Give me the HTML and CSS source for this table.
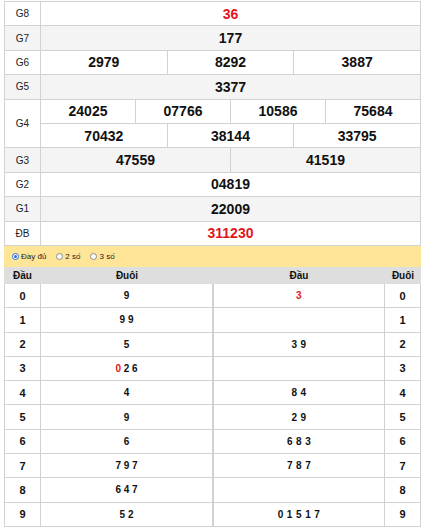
FILE: index.html
```html
<!DOCTYPE html>
<html>
<head>
<meta charset="utf-8">
<link rel="stylesheet" href="styles.css">
</head>
<body>
<div class="wrap">
  <div class="kq">
    <div class="row"><div class="lbl">G8</div><div class="vals c1"><div class="v red">36</div></div></div>
    <div class="row alt"><div class="lbl">G7</div><div class="vals c1"><div class="v">177</div></div></div>
    <div class="row"><div class="lbl">G6</div><div class="vals c3"><div class="v">2979</div><div class="v">8292</div><div class="v">3887</div></div></div>
    <div class="row alt"><div class="lbl">G5</div><div class="vals c1"><div class="v">3377</div></div></div>
    <div class="row dbl"><div class="lbl">G4</div>
      <div class="sub">
        <div class="vals c4"><div class="v">24025</div><div class="v">07766</div><div class="v">10586</div><div class="v">75684</div></div>
        <div class="vals c3"><div class="v">70432</div><div class="v">38144</div><div class="v">33795</div></div>
      </div>
    </div>
    <div class="row alt"><div class="lbl">G3</div><div class="vals c2"><div class="v">47559</div><div class="v">41519</div></div></div>
    <div class="row"><div class="lbl">G2</div><div class="vals c1"><div class="v">04819</div></div></div>
    <div class="row alt"><div class="lbl">G1</div><div class="vals c1"><div class="v">22009</div></div></div>
    <div class="row"><div class="lbl">ĐB</div><div class="vals c1"><div class="v red">311230</div></div></div>
  </div>

  <div class="opts">
    <span class="opt"><span class="radio on"></span>Đầy đủ</span>
    <span class="opt"><span class="radio"></span>2 số</span>
    <span class="opt"><span class="radio"></span>3 số</span>
  </div>

  <div class="lt-head">
    <div>Đầu</div><div>Đuôi</div><div>Đầu</div><div>Đuôi</div>
  </div>
  <div class="lt">
    <div class="h">0</div><div class="t">9</div><div class="t2 red">3</div><div class="h">0</div>
    <div class="h">1</div><div class="t">9 9</div><div class="t2"></div><div class="h">1</div>
    <div class="h">2</div><div class="t">5</div><div class="t2">3 9</div><div class="h">2</div>
    <div class="h">3</div><div class="t"><span><span class="red">0</span> 2 6</span></div><div class="t2"></div><div class="h">3</div>
    <div class="h">4</div><div class="t">4</div><div class="t2">8 4</div><div class="h">4</div>
    <div class="h">5</div><div class="t">9</div><div class="t2">2 9</div><div class="h">5</div>
    <div class="h">6</div><div class="t">6</div><div class="t2">6 8 3</div><div class="h">6</div>
    <div class="h">7</div><div class="t">7 9 7</div><div class="t2">7 8 7</div><div class="h">7</div>
    <div class="h">8</div><div class="t">6 4 7</div><div class="t2"></div><div class="h">8</div>
    <div class="h">9</div><div class="t">5 2</div><div class="t2">0 1 5 1 7</div><div class="h">9</div>
  </div>
</div>
</body>
</html>
```
FILE: styles.css
```css
* { box-sizing: border-box; }
body {
  margin: 0;
  padding: 1px 0 0 4px;
  font-family: "Liberation Sans", Arial, sans-serif;
  color: #111;
  background: #fff;
}
.wrap { width: 417px; }

.kq {
  border-top: 1px solid #d2d2d2;
  border-left: 1px solid #d2d2d2;
}
.row {
  display: grid;
  grid-template-columns: 36px 380px;
  height: 24.4px;
}
.row.dbl { height: 48.8px; }
.row.alt { background: #f4f4f4; }
.lbl {
  border-right: 1px solid #d2d2d2;
  border-bottom: 1px solid #d2d2d2;
  display: flex;
  align-items: center;
  justify-content: center;
  font-size: 10px;
  color: #222;
}
.sub { display: grid; grid-template-rows: 1fr 1fr; }
.vals { display: grid; }
.c1 { grid-template-columns: 1fr; }
.c2 { grid-template-columns: 1fr 1fr; }
.c3 { grid-template-columns: 1fr 1fr 1fr; }
.c4 { grid-template-columns: 1fr 1fr 1fr 1fr; }
.v {
  border-right: 1px solid #d2d2d2;
  border-bottom: 1px solid #d2d2d2;
  display: flex;
  align-items: center;
  justify-content: center;
  font-size: 14px;
  font-weight: bold;
}
.red { color: #e3151b; }

.opts {
  height: 21px;
  background: #ffe598;
  display: flex;
  align-items: center;
  padding-left: 8px;
  font-size: 8px;
  color: #222;
}
.opt { display: flex; align-items: center; margin-right: 10px; }
.radio {
  width: 7px;
  height: 7px;
  border: 1px solid #8a8a8a;
  border-radius: 50%;
  background: #fff;
  margin-right: 2px;
  position: relative;
}
.radio.on { border-color: #2f6fd8; }
.radio.on::after {
  content: "";
  position: absolute;
  left: 1px; top: 1px;
  width: 3px; height: 3px;
  border-radius: 50%;
  background: #2f6fd8;
}

.lt-head {
  display: grid;
  grid-template-columns: 37px 172px 172px 36px;
  height: 17px;
  background: #dedede;
  font-size: 10px;
  font-weight: bold;
  color: #111;
}
.lt-head div { display: flex; align-items: center; justify-content: center; }

.lt {
  display: grid;
  grid-template-columns: 36px 172px 172px 36px;
  grid-auto-rows: 24.3px;
  border-left: 1px solid #d2d2d2;
}
.lt > div {
  border-right: 1px solid #d2d2d2;
  border-bottom: 1px solid #d2d2d2;
  display: flex;
  align-items: center;
  justify-content: center;
  font-weight: bold;
}
.lt .h { font-size: 11px; }
.lt .t { font-size: 10px; }
.lt .t2 { font-size: 10px; letter-spacing: 0.4px; border-left: 1px solid #d2d2d2; }
```
